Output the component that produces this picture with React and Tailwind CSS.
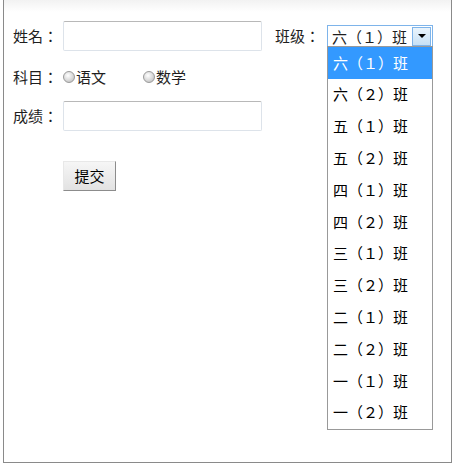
import React from "react";

const classes = ["六（１）班", "六（２）班", "五（１）班", "五（２）班", "四（１）班", "四（２）班", "三（１）班", "三（２）班", "二（１）班", "二（２）班", "一（１）班", "一（２）班"];

const Radio = ({ label }) => (
  <label className="flex items-center">
    <span className="w-[12px] h-[12px] rounded-full border border-[#9a9a9a] bg-[radial-gradient(circle_at_40%_35%,#ffffff,#d8d8d8_55%,#b4b4b4)]" />
    <span className="ml-[1px]">{label}</span>
  </label>
);

const App = () => {
  return (
    <div
      className="relative ml-[3px] w-[449px] h-[463px] border-x border-b border-[#8a8a8a] bg-[linear-gradient(#f2f2f2,#ffffff_12px)] text-[15px] text-[#1e1e1e]"
      style={{ fontFamily: '"Noto Sans CJK TC", "Noto Sans CJK SC", "Liberation Sans", sans-serif' }}
    >
      <div className="pt-[21px] pl-[9px]">
        {/* 姓名 + 班级 */}
        <div className="flex items-center h-[30px]">
          <span className="w-[50px]">姓名：</span>
          <div className="w-[199px] h-[30px] rounded-[2px] border border-[#dde3ea] border-t-[#b8b8b8]" />
          <span className="ml-[13px] w-[52px]">班级：</span>
          <div className="flex items-center w-[106px] h-[23px] border border-[#7eb4ea] bg-white">
            <span className="flex-1 pl-[4px] leading-none whitespace-nowrap">六（１）班</span>
            <span className="flex items-center justify-center w-[19px] h-[19px] mr-[1px] border border-[#7eb4ea] bg-[linear-gradient(#eaf4fc,#c7e1f6)]">
              <span className="w-0 h-0 border-x-[4px] border-x-transparent border-t-[4px] border-t-black" />
            </span>
          </div>
        </div>

        {/* 科目 */}
        <div className="flex items-center h-[20px] mt-[16px]">
          <span className="w-[50px]">科目：</span>
          <div className="w-[80px]">
            <Radio label="语文" />
          </div>
          <Radio label="数学" />
        </div>

        {/* 成绩 */}
        <div className="flex items-center h-[30px] mt-[14px]">
          <span className="w-[50px]">成绩：</span>
          <div className="w-[199px] h-[30px] rounded-[2px] border border-[#dde3ea] border-t-[#b8b8b8]" />
        </div>

        <div className="pl-[50px] mt-[30px]">
          <button className="w-[53px] h-[30px] border border-[#e8e8e8] border-r-[#8c8c8c] border-b-[#8c8c8c] bg-[linear-gradient(#f6f6f6,#e2e2e2)] text-black">
            提交
          </button>
        </div>
      </div>

      {/* 展开的下拉列表 */}
      <ul className="absolute left-[323px] top-[46px] w-[106px] border border-[#999] bg-white">
        {classes.map((c, i) => (
          <li
            key={c}
            className={
              i === 0
                ? "h-[31.8px] flex items-center pl-[5px] bg-[#3399ff] text-white whitespace-nowrap"
                : "h-[31.8px] flex items-center pl-[5px] text-black whitespace-nowrap"
            }
          >
            {c}
          </li>
        ))}
      </ul>
    </div>
  );
};

export default App;
